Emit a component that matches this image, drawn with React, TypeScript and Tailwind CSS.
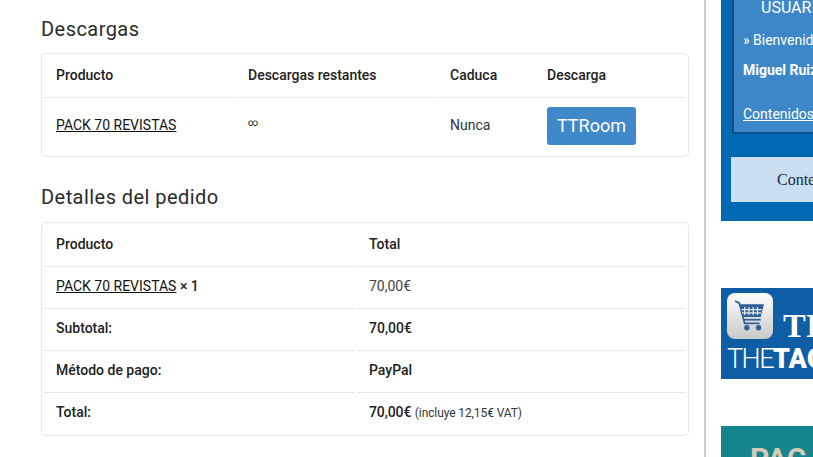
import React from 'react';

// Rows of the order table
const orderRows = [
  { label: 'Subtotal:', value: <strong className="font-medium">70,00€</strong> },
  { label: 'Método de pago:', value: <span className="font-medium">PayPal</span> },
  {
    label: 'Total:',
    value: (
      <>
        <strong className="font-medium tracking-[-0.1px]">70,00€</strong>{' '}
        <small className="text-[12px] tracking-[-0.1px] text-[#333333]">(incluye 12,15€ VAT)</small>
      </>
    ),
  },
];

const CartIcon = () => (
  <svg viewBox="0 0 30 30" className="h-[32px] w-[32px]" fill="none">
    <path d="M1 1l4 2 5 19h14" stroke="#2f5f96" strokeWidth="1.6" />
    <path d="M5 4h23l-3 12H9z" fill="#2f5f96" />
    <path
      d="M10 6.500v7.500M14 6.500v7.500M18 6.500v7.500M22 6.500v7.500M7 9h19M7.500 12h18"
      stroke="#e6e8ec"
      strokeWidth="1.200"
    />
    <path d="M9 18.500h16" stroke="#2f5f96" strokeWidth="1.600" />
    <circle cx="12" cy="26" r="2.500" fill="#2f5f96" />
    <circle cx="23" cy="26" r="2.500" fill="#2f5f96" />
  </svg>
);

const Sidebar = () => (
  <aside className="w-[92px] shrink-0 ml-[15px] overflow-hidden">
    <div className="w-[300px] h-[221px] bg-[#0069b3] pl-[11px] pr-[10px]">
      <div className="h-[134px] border-2 border-t-0 border-[#0d4a86] bg-[#3d87c8] pl-[9px] text-white text-[14px]">
        <p className="pl-[18px] text-[16px] leading-[16px]">USUARIO</p>
        <p className="mt-[15px] leading-[18px] whitespace-nowrap">» Bienvenido</p>
        <p className="mt-[12px] leading-[18px] font-bold whitespace-nowrap">Miguel Ruiz</p>
        <p className="mt-[26px] leading-[18px] underline whitespace-nowrap">Contenidos</p>
      </div>
      <div className="mt-[23px] -ml-[1px] h-[45px] bg-[#c9dfef] flex items-center pl-[46px] text-[#1d2b3a] text-[16px] font-['Liberation_Serif',serif]">
        Contenidos
      </div>
    </div>

    <div className="mt-[67px] w-[300px] h-[91px] bg-[#0e5ea6] pl-[6px] pt-[5px] text-white">
      <div className="flex items-start h-[46px]">
        <div className="w-[46px] h-[46px] shrink-0 rounded-[8px] bg-gradient-to-b from-white to-[#c9c9c9] flex items-center justify-center">
          <CartIcon />
        </div>
        <span className="ml-[10px] mt-[16px] text-[34px] leading-[34px] font-bold font-['Liberation_Serif',serif]">
          TIENDA
        </span>
      </div>
      <p className="mt-[4px] text-[27px] leading-[32px] tracking-[-1.5px] font-['Roboto',sans-serif] whitespace-nowrap">
        <span className="font-light">THE</span>
        <span className="font-black tracking-[0px]">TAGS</span>
      </p>
    </div>

    <div className="mt-[47px] w-[300px] h-[40px] bg-[#15858c] pl-[29px] pt-[18px] text-[#d4cbb9] text-[30px] leading-[30px] font-bold">
      PAC
    </div>
  </aside>
);

export default function App() {
  return (
    <div className="flex w-[813px] h-[457px] overflow-hidden bg-white font-['Roboto',sans-serif] text-[14px] text-[#333333]">
      <main className="w-[704px] shrink-0 pl-[41px] pr-[15px] pt-[17px]">
        <h2 className="text-[20px] leading-[24px] tracking-[0.45px] text-[#2b2b2b]">Descargas</h2>

        <div className="mt-[12px] h-[104px] rounded-[5px] border border-[#e6e6e6]">
          <table className="border-separate border-spacing-x-[2px] border-spacing-y-0 table-fixed w-[646px]">
            <colgroup>
              <col className="w-[190px]" />
              <col className="w-[200px]" />
              <col className="w-[95px]" />
              <col />
            </colgroup>
            <thead>
              <tr className="h-[44px] text-left text-[#222222]">
                <th className="border-b border-[#e6e6e6] pl-[12px] font-medium">Producto</th>
                <th className="border-b border-[#e6e6e6] pl-[12px] font-medium">Descargas restantes</th>
                <th className="border-b border-[#e6e6e6] pl-[12px] font-medium">Caduca</th>
                <th className="border-b border-[#e6e6e6] pl-[12px] font-medium">Descarga</th>
              </tr>
            </thead>
            <tbody>
              <tr className="h-[58px]">
                <td className="pl-[12px] pb-[4px]">
                  <a className="underline text-[#111111]">PACK 70 REVISTAS</a>
                </td>
                <td className="pl-[12px] pb-[9px] text-[10px] text-[#111111]">∞</td>
                <td className="pl-[12px] pb-[4px]">Nunca</td>
                <td className="pl-[12px] pb-[2px]">
                  <a className="inline-flex items-center justify-center w-[89px] h-[38px] pb-[2px] rounded-[3px] bg-[#3f88c9] text-white text-[18px]">
                    TTRoom
                  </a>
                </td>
              </tr>
            </tbody>
          </table>
        </div>

        <h2 className="mt-[28px] text-[20px] leading-[24px] tracking-[0.45px] text-[#2b2b2b]">Detalles del pedido</h2>

        <div className="mt-[13px] h-[214px] rounded-[5px] border border-[#e6e6e6]">
          <table className="border-separate border-spacing-x-[2px] border-spacing-y-0 table-fixed w-[646px] text-[#222222]">
            <colgroup>
              <col className="w-[311px]" />
              <col />
            </colgroup>
            <thead>
              <tr className="h-[44px] text-left">
                <th className="border-b border-[#e6e6e6] pl-[12px] font-medium">Producto</th>
                <th className="border-b border-[#e6e6e6] pl-[12px] font-medium">Total</th>
              </tr>
            </thead>
            <tbody>
              <tr className="h-[42px]">
                <td className="border-b border-[#e6e6e6] pl-[12px] pb-[2px]">
                  <a className="underline text-[#111111]">PACK 70 REVISTAS</a>{' '}
                  <strong className="font-medium">× 1</strong>
                </td>
                <td className="border-b border-[#e6e6e6] pl-[12px] pb-[2px] text-[#444444]">70,00€</td>
              </tr>
              {orderRows.map((row, index) => (
                <tr key={row.label} className="h-[42px]">
                  <th
                    className={`pl-[12px] text-left font-medium ${
                      index < orderRows.length - 1 ? 'border-b border-[#e6e6e6] pb-[2px]' : 'pb-[4px]'
                    }`}
                  >
                    {row.label}
                  </th>
                  <td
                    className={`pl-[12px] ${
                      index < orderRows.length - 1 ? 'border-b border-[#e6e6e6] pb-[2px]' : 'pb-[4px]'
                    }`}
                  >
                    {row.value}
                  </td>
                </tr>
              ))}
            </tbody>
          </table>
        </div>
      </main>

      <div className="w-[2px] shrink-0 bg-[#cccccc]" />
      <Sidebar />
    </div>
  );
}
